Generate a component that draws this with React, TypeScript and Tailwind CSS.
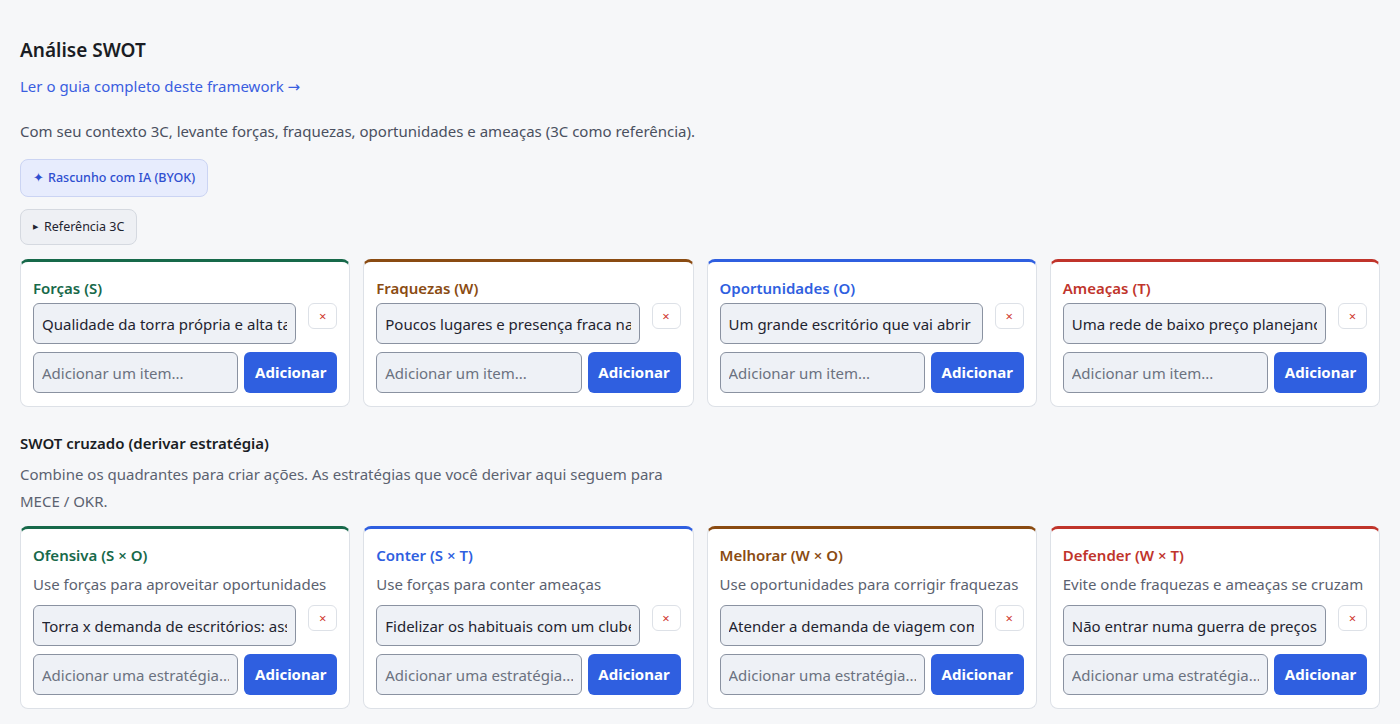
import React from "react";

type Quad = {
  title: string;
  desc?: string;
  item: string;
  placeholder: string;
  border: string;
  text: string;
};

const quadrants: Quad[] = [
  {
    title: "Forças (S)",
    item: "Qualidade da torra própria e alta taxa de recompra dos clientes",
    placeholder: "Adicionar um item...",
    border: "border-t-[#17694a]",
    text: "text-[#17694a]",
  },
  {
    title: "Fraquezas (W)",
    item: "Poucos lugares e presença fraca nas redes sociais",
    placeholder: "Adicionar um item...",
    border: "border-t-[#8a4b12]",
    text: "text-[#8a4b12]",
  },
  {
    title: "Oportunidades (O)",
    item: "Um grande escritório que vai abrir perto da loja",
    placeholder: "Adicionar um item...",
    border: "border-t-[#2f5fe0]",
    text: "text-[#2f5fe0]",
  },
  {
    title: "Ameaças (T)",
    item: "Uma rede de baixo preço planejando abrir na região",
    placeholder: "Adicionar um item...",
    border: "border-t-[#c0342b]",
    text: "text-[#c0342b]",
  },
];

const cross: Quad[] = [
  {
    title: "Ofensiva (S × O)",
    desc: "Use forças para aproveitar oportunidades",
    item: "Torra x demanda de escritórios: assinatura de café",
    placeholder: "Adicionar uma estratégia...",
    border: "border-t-[#17694a]",
    text: "text-[#17694a]",
  },
  {
    title: "Conter (S × T)",
    desc: "Use forças para conter ameaças",
    item: "Fidelizar os habituais com um clube de assinatura",
    placeholder: "Adicionar uma estratégia...",
    border: "border-t-[#2f5fe0]",
    text: "text-[#2f5fe0]",
  },
  {
    title: "Melhorar (W × O)",
    desc: "Use oportunidades para corrigir fraquezas",
    item: "Atender a demanda de viagem com takeout",
    placeholder: "Adicionar uma estratégia...",
    border: "border-t-[#8a4b12]",
    text: "text-[#8a4b12]",
  },
  {
    title: "Defender (W × T)",
    desc: "Evite onde fraquezas e ameaças se cruzam",
    item: "Não entrar numa guerra de preços com a rede",
    placeholder: "Adicionar uma estratégia...",
    border: "border-t-[#c0342b]",
    text: "text-[#c0342b]",
  },
];

function QuadCard({ q }: { q: Quad }) {
  return (
    <div
      className={`rounded-lg border border-[#dde1e7] border-t-[3px] ${q.border} bg-white px-[12px] pt-[16px] pb-[13px]`}
    >
      <div className={`text-[15px] font-semibold leading-[20px] ${q.text}`}>
        {q.title}
      </div>
      {q.desc && (
        <div className="mt-[9px] text-[15px] leading-[20px] text-[#5b6270]">
          {q.desc}
        </div>
      )}
      <div className={`flex items-start gap-[12px] ${q.desc ? "mt-[11px]" : "mt-[5px]"}`}>
        <input
          readOnly
          value={q.item}
          className="h-[41px] min-w-0 flex-1 rounded-md border border-[#8a92a1] bg-[#eef1f6] px-[8px] text-[15px] text-[#1f2430] outline-none"
        />
        <button className="flex h-[26px] w-[29px] shrink-0 items-center justify-center rounded-md border border-[#dde1e7] bg-white text-[13px] leading-none text-[#d0382f]">
          ×
        </button>
      </div>
      <div className="mt-[8px] flex gap-[6px]">
        <input
          placeholder={q.placeholder}
          className="h-[41px] min-w-0 flex-1 rounded-md border border-[#8a92a1] bg-[#eef1f6] px-[8px] text-[15px] text-[#1f2430] placeholder:text-[#6b7280] outline-none"
        />
        <button className="h-[41px] w-[93px] shrink-0 rounded-md bg-[#2f5fe0] text-[15px] font-bold text-white">
          Adicionar
        </button>
      </div>
    </div>
  );
}

export default function App() {
  return (
    <div
      className="min-h-screen bg-[#f6f7f9] px-[20px] pt-[37px] pb-[16px] text-[#1f2430]"
      style={{ fontFamily: '"Noto Sans", "Open Sans", sans-serif' }}
    >
      <h1 className="text-[19px] font-semibold leading-[26px] text-[#1a1d24]">
        Análise SWOT
      </h1>
      <a href="#" className="mt-[11px] block text-[15px] leading-[24px] text-[#3a5ee0]">
        Ler o guia completo deste framework{" "}
        <span style={{ fontFamily: '"DejaVu Sans", sans-serif' }}>→</span>
      </a>
      <p className="mt-[20px] text-[15px] leading-[24px] text-[#4a5060]">
        Com seu contexto 3C, levante forças, fraquezas, oportunidades e ameaças (3C como referência).
      </p>
      <button className="mt-[16px] flex h-[38px] items-center gap-[4px] rounded-lg border border-[#cbd4f3] bg-[#e7ecfd] px-[12px] text-[12.5px] font-medium text-[#2f4fd0]">
        <span className="text-[13px]">✦</span>
        Rascunho com IA (BYOK)
      </button>
      <button className="mt-[12px] flex h-[36px] items-center gap-[6px] rounded-lg border border-[#d5d9e0] bg-[#eef0f4] px-[12px] text-[12.5px] text-[#1f2430]">
        <span className="text-[7px]">▶</span>
        Referência 3C
      </button>

      <div className="mt-[14px] grid grid-cols-4 gap-[13px]">
        {quadrants.map((q) => (
          <QuadCard key={q.title} q={q} />
        ))}
      </div>

      <h2 className="mt-[26px] text-[15px] font-semibold leading-[20px] text-[#1a1d24]">
        SWOT cruzado (derivar estratégia)
      </h2>
      <p className="mt-[8px] max-w-[660px] text-[15px] leading-[27px] text-[#5b6270]">
        Combine os quadrantes para criar ações. As estratégias que você derivar aqui seguem para MECE / OKR.
      </p>

      <div className="mt-[11px] grid grid-cols-4 gap-[13px]">
        {cross.map((q) => (
          <QuadCard key={q.title} q={q} />
        ))}
      </div>
    </div>
  );
}
